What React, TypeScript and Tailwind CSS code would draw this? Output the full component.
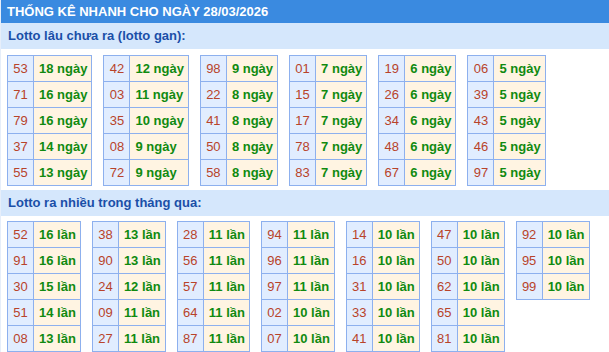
const gan: [string, number][][] = [
  [["53", 18], ["71", 16], ["79", 16], ["37", 14], ["55", 13]],
  [["42", 12], ["03", 11], ["35", 10], ["08", 9], ["72", 9]],
  [["98", 9], ["22", 8], ["41", 8], ["50", 8], ["58", 8]],
  [["01", 7], ["15", 7], ["17", 7], ["78", 7], ["83", 7]],
  [["19", 6], ["26", 6], ["34", 6], ["48", 6], ["67", 6]],
  [["06", 5], ["39", 5], ["43", 5], ["46", 5], ["97", 5]],
]

const nhieu: [string, number][][] = [
  [["52", 16], ["91", 16], ["30", 15], ["51", 14], ["08", 13]],
  [["38", 13], ["90", 13], ["24", 12], ["09", 11], ["27", 11]],
  [["28", 11], ["56", 11], ["57", 11], ["64", 11], ["87", 11]],
  [["94", 11], ["96", 11], ["97", 11], ["02", 10], ["07", 10]],
  [["14", 10], ["16", 10], ["31", 10], ["33", 10], ["41", 10]],
  [["47", 10], ["50", 10], ["62", 10], ["65", 10], ["81", 10]],
  [["92", 10], ["95", 10], ["99", 10]],
]

function StatTable({ rows, unit }: { rows: [string, number][]; unit: string }) {
  return (
    <table className="border-collapse self-start">
      <tbody>
        {rows.map(([num, count]) => (
          <tr key={num} className="h-[26px]">
            <td className="w-[26px] border border-[#8db0ee] bg-[#e1edff] text-center text-[13px] text-[#b8432a]">
              {num}
            </td>
            <td className="border border-[#8db0ee] bg-[#fff4e2] pl-[5px] pr-[4px] text-[13px] font-bold text-[#108a10] whitespace-nowrap">
              {count} {unit}
            </td>
          </tr>
        ))}
      </tbody>
    </table>
  )
}

function SectionBar({ title }: { title: string }) {
  return (
    <div className="h-[26px] bg-[#d5e7fc] px-[7px] flex items-center text-[13px] font-bold text-[#1a4fa8]">
      {title}
    </div>
  )
}

export default function App() {
  return (
    <div className="w-[609px] h-[352px] overflow-hidden bg-white border-l border-[#e6eefa] font-['Liberation_Sans',Arial,sans-serif]">
      <div className="h-[23px] bg-[#3a8ae0] px-[6px] flex items-center text-[13px] font-bold text-white">
        THỐNG KÊ NHANH CHO NGÀY 28/03/2026
      </div>
      <SectionBar title="Lotto lâu chưa ra (lotto gan):" />
      <div className="flex gap-[11px] pl-[6px] pt-[6px] pb-[4px]">
        {gan.map((t, i) => (
          <StatTable key={i} rows={t} unit="ngày" />
        ))}
      </div>
      <SectionBar title="Lotto ra nhiều trong tháng qua:" />
      <div className="flex gap-[11px] pl-[6px] pt-[5px]">
        {nhieu.map((t, i) => (
          <StatTable key={i} rows={t} unit="lần" />
        ))}
      </div>
    </div>
  )
}
